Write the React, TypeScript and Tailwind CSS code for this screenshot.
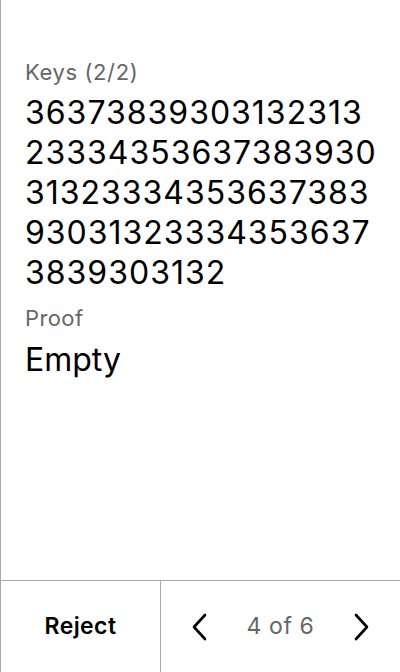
import React from 'react';

const keyValue = '363738393031323132333435363738393031323334353637383930313233343536373839303132';

const Chevron: React.FC<{ dir: 'left' | 'right' }> = ({ dir }) => (
  <svg width="18" height="28" viewBox="0 0 18 28" fill="none">
    <path
      d={dir === 'left' ? 'M14 2 L3 14 L14 26' : 'M4 2 L15 14 L4 26'}
      stroke="#000"
      strokeWidth="2.6"
      strokeLinecap="round"
      strokeLinejoin="round"
    />
  </svg>
);

const App: React.FC = () => {
  return (
    <div
      className="h-[672px] w-[400px] flex flex-col bg-white border-l border-[#aaaaaa] text-black"
      style={{ fontFamily: 'Inter, "Noto Sans", sans-serif' }}
    >
      <div className="flex-1 pl-[24px] pr-[20px] pt-[59px]">
        <div className="text-[22px] leading-[26px] tracking-[0.6px] text-[#666666]">Keys (2/2)</div>
        <div className="mt-[8px] text-[32px] leading-[40px] tracking-[1px] break-all w-[355px]">{keyValue}</div>
        <div className="mt-[12px] text-[22px] leading-[26px] tracking-[0.4px] text-[#666666]">Proof</div>
        <div className="mt-[9px] text-[32px] leading-[40px]">Empty</div>
      </div>

      <div className="h-[92px] flex border-t border-[#aaaaaa]">
        <button className="w-[160px] flex items-center justify-center border-r border-[#aaaaaa] text-[23px] font-semibold tracking-[0.4px]">
          Reject
        </button>
        <div className="flex-1 flex items-center justify-between px-[30px]">
          <button className="flex items-center">
            <Chevron dir="left" />
          </button>
          <span className="text-[23px] tracking-[0.6px] text-[#666666]">4 of 6</span>
          <button className="flex items-center">
            <Chevron dir="right" />
          </button>
        </div>
      </div>
    </div>
  );
};

export default App;
